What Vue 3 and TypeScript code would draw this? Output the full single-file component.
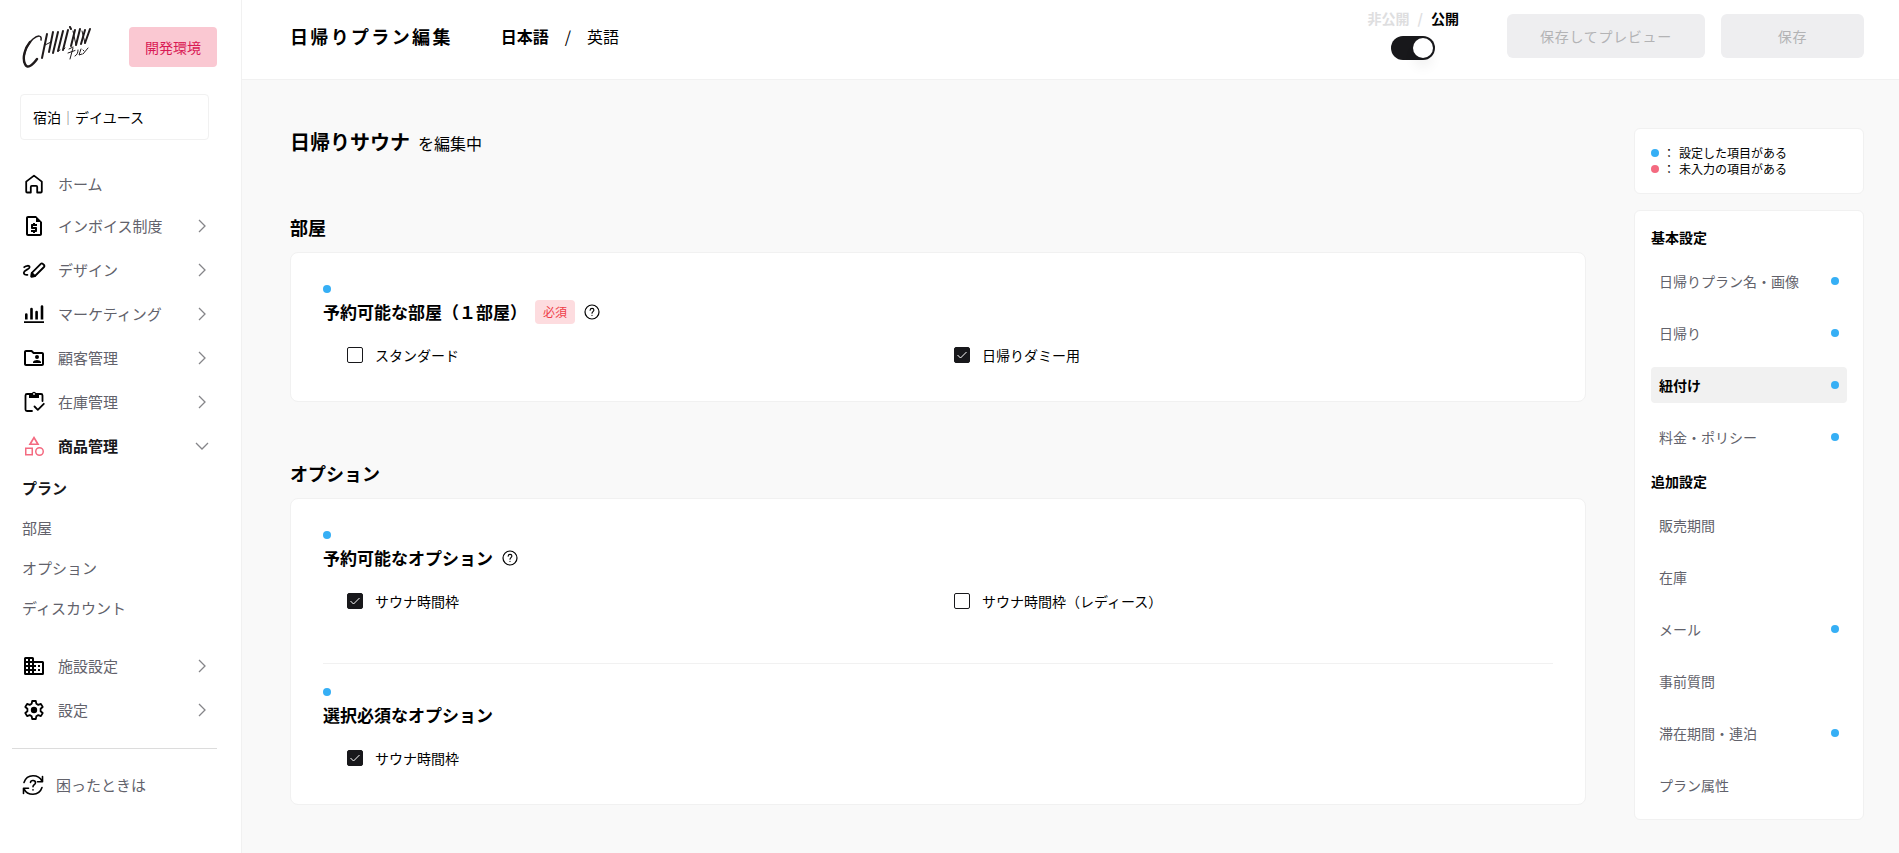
<script setup lang="ts">
import { ref } from 'vue'

type IconName = 'home' | 'invoice' | 'design' | 'chart' | 'customers' | 'stock' | 'products' | 'building' | 'gear'

interface NavItem {
  label: string
  icon: IconName
  open?: boolean
  leaf?: boolean
}

interface Choice {
  id: string
  label: string
  checked: boolean
}

interface Step {
  label: string
  filled: boolean
  current?: boolean
}

const upperNav: NavItem[] = [
  { label: 'ホーム', icon: 'home', leaf: true },
  { label: 'インボイス制度', icon: 'invoice' },
  { label: 'デザイン', icon: 'design' },
  { label: 'マーケティング', icon: 'chart' },
  { label: '顧客管理', icon: 'customers' },
  { label: '在庫管理', icon: 'stock' },
  { label: '商品管理', icon: 'products', open: true },
]

const productNav = ['プラン', '部屋', 'オプション', 'ディスカウント']

const lowerNav: NavItem[] = [
  { label: '施設設定', icon: 'building' },
  { label: '設定', icon: 'gear' },
]

const navGroups = [
  { id: 'upper', items: upperNav, children: productNav },
  { id: 'lower', items: lowerNav, children: [] as string[] },
]

const published = ref(true)

const sections = ref([
  {
    title: '部屋',
    fields: [
      {
        label: '予約可能な部屋（１部屋）',
        required: true,
        help: true,
        choices: [
          { id: 'room-standard', label: 'スタンダード', checked: false },
          { id: 'room-daytrip', label: '日帰りダミー用', checked: true },
        ] as Choice[],
      },
    ],
  },
  {
    title: 'オプション',
    fields: [
      {
        label: '予約可能なオプション',
        required: false,
        help: true,
        choices: [
          { id: 'option-sauna', label: 'サウナ時間枠', checked: true },
          { id: 'option-sauna-ladies', label: 'サウナ時間枠（レディース）', checked: false },
        ] as Choice[],
      },
      {
        label: '選択必須なオプション',
        required: false,
        help: false,
        choices: [{ id: 'must-sauna', label: 'サウナ時間枠', checked: true }] as Choice[],
      },
    ],
  },
])

const stepGroups: { title: string; steps: Step[] }[] = [
  {
    title: '基本設定',
    steps: [
      { label: '日帰りプラン名・画像', filled: true },
      { label: '日帰り', filled: true },
      { label: '紐付け', filled: true, current: true },
      { label: '料金・ポリシー', filled: true },
    ],
  },
  {
    title: '追加設定',
    steps: [
      { label: '販売期間', filled: false },
      { label: '在庫', filled: false },
      { label: 'メール', filled: true },
      { label: '事前質問', filled: false },
      { label: '滞在期間・連泊', filled: true },
      { label: 'プラン属性', filled: false },
    ],
  },
]
</script>

<template>
  <div class="layout">
    <aside class="sidebar">
      <div class="brand">
        <svg class="logo" viewBox="0 0 70 44" role="img" aria-label="CHILLNN" fill="none" stroke="#1f1a1b" stroke-linecap="round">
          <path d="M19 14C20 9 16 9 11 13C4 19 1 29 2 36" stroke-width="1.5" />
          <path d="M8 16C3 22 0 32 3 38C5 43 10 40 15 33" stroke-width="2.4" />
          <path d="M25 8L20 32M31 6L27 26M36 6L31 27M41 5L36 25M46 4L41 24M53 4L49 20M58 3L54 19M63 4L59 18M68 3L63 17" stroke-width="2" />
          <path d="M23 19L29 16M51 5L54 19M60 5L63 17M36 25L38 24M41 24L43 22" stroke-width="1" />
          <path d="M48 1L49 3" stroke-width="2" />
          <path d="M51 21L47 23M46 27L53 24.5M51 22L48 33M56 24C56 27 55 29 53 30M59 23L57 29L60 28M61 24L62 25M66 22L61 28" stroke-width="1" />
        </svg>
        <span class="env">開発環境</span>
      </div>

      <button class="mode" type="button">宿泊<span class="mode-bar">｜</span>デイユース</button>

      <nav class="nav" aria-label="メインメニュー">
        <ul v-for="group in navGroups" :key="group.id" class="nav-group">
          <li v-for="item in group.items" :key="item.label">
            <a href="#" class="nav-link" :class="{ 'is-leaf': item.leaf, 'is-open': item.open }">
              <svg class="nav-icon" viewBox="0 0 24 24" aria-hidden="true" fill="currentColor">
                <path
                  v-if="item.icon === 'home'"
                  d="M5.2 20.5a1 1 0 0 1-1-1V9.6L12 3.6l7.8 6v9.9a1 1 0 0 1-1 1h-3.6v-5.6a1 1 0 0 0-1-1H9.8a1 1 0 0 0-1 1v5.6z"
                  fill="none" stroke="currentColor" stroke-width="1.8" stroke-linejoin="round"
                />
                <path
                  v-else-if="item.icon === 'invoice'"
                  d="M14 2H6c-1.1 0-2 .9-2 2v16c0 1.1.9 2 2 2h12c1.1 0 2-.9 2-2V8l-6-6zM6 20V4h8v4h4v12H6zm5-1h2v-1h1c.55 0 1-.45 1-1v-3c0-.55-.45-1-1-1h-3v-1h4v-2h-2V9h-2v1h-1c-.55 0-1 .45-1 1v3c0 .55.45 1 1 1h3v1H9v2h2v1z"
                />
                <g v-else-if="item.icon === 'design'" fill="none" stroke="currentColor" stroke-width="1.8" stroke-linejoin="round" stroke-linecap="round">
                  <path d="M2.2 9.2C4 7.6 7.6 7 7.6 9.2C7.6 11.4 1.8 12 1.8 14.8C1.8 16.4 3.4 17 5.4 16.8" />
                  <path d="M9.4 18.6L9.8 14.8L18.8 5.8A1.4 1.4 0 0 1 20.8 5.8L22 7A1.4 1.4 0 0 1 22 9L13 18z" />
                  <path d="M9.4 18.6L9.8 15L12.8 18z" fill="currentColor" />
                </g>
                <path
                  v-else-if="item.icon === 'chart'"
                  d="M2 19.3h20v1.8H2zM3 12.5a1.3 1.3 0 0 1 2.6 0v5H3zM8.2 7a1.3 1.3 0 0 1 2.6 0v10.5H8.2zM13.3 10a1.3 1.3 0 0 1 2.6 0v7.5h-2.6zM18.7 4.5a1.3 1.3 0 0 1 2.6 0v13h-2.6z"
                />
                <path
                  v-else-if="item.icon === 'customers'"
                  d="M20 6h-8l-2-2H4c-1.1 0-2 .9-2 2v12c0 1.1.9 2 2 2h16c1.1 0 2-.9 2-2V8c0-1.1-.9-2-2-2zm0 12H4V6h5.17l2 2H20v10zM15 13a2 2 0 1 0 0-4 2 2 0 0 0 0 4zm-4 4h8v-1c0-1.33-2.67-2-4-2s-4 .67-4 2v1z"
                />
                <g v-else-if="item.icon === 'stock'">
                  <path d="M10 21H5a1.5 1.5 0 0 1-1.5-1.5V5.5A1.5 1.5 0 0 1 5 4h14a1.5 1.5 0 0 1 1.5 1.5V11" fill="none" stroke="currentColor" stroke-width="1.8" stroke-linecap="round" />
                  <path d="M7 3.5h2.8a2.3 2.3 0 0 1 4.4 0H17V8H7z" />
                  <circle cx="12" cy="4" r=".9" fill="#fff" />
                  <path d="M12.5 16.5L15.8 19.8L21.8 13.8" fill="none" stroke="currentColor" stroke-width="1.8" stroke-linecap="round" stroke-linejoin="round" />
                </g>
                <path
                  v-else-if="item.icon === 'products'"
                  d="M12 2l-5.5 9h11L12 2zm0 3.2L14.5 9.5h-5L12 5.2zM17.500 13a4.500 4.500 0 1 0 0 9 4.500 4.500 0 0 0 0-9zm0 7.500a3 3 0 1 1 0-6 3 3 0 0 1 0 6zM3 21.500h8v-8H3v8zm1.500-6.500h5v5h-5v-5z"
                />
                <path
                  v-else-if="item.icon === 'building'"
                  d="M12 7V4.500a1.500 1.500 0 0 0-1.500-1.500h-7A1.500 1.500 0 0 0 2 4.500v15A1.500 1.500 0 0 0 3.500 21h17a1.500 1.500 0 0 0 1.500-1.500v-11A1.500 1.500 0 0 0 20.500 7H12zM6 19H4v-2h2v2zm0-4H4v-2h2v2zm0-4H4V9h2v2zm0-4H4V5h2v2zm4 12H8v-2h2v2zm0-4H8v-2h2v2zm0-4H8V9h2v2zm0-4H8V5h2v2zm10 12h-8v-2h2v-2h-2v-2h2v-2h-2V9h8v10zm-2-8h-2v2h2v-2zm0 4h-2v2h2v-2z"
                />
                <g v-else>
                  <path
                    d="M10.2 3h3.6l.5 2.7 2 1.15 2.6-.95 1.8 3.1-2.1 1.8v2.4l2.1 1.8-1.8 3.1-2.6-.95-2 1.15-.5 2.7h-3.6l-.5-2.7-2-1.15-2.6.95L3.300 15l2.100-1.800v-2.400L3.300 9l1.800-3.100 2.600.95 2-1.150z"
                    fill="none" stroke="currentColor" stroke-width="1.8" stroke-linejoin="round"
                  />
                  <circle cx="12" cy="12" r="3.2" />
                </g>
              </svg>
              <span class="nav-text">{{ item.label }}</span>
              <svg v-if="!item.leaf" class="chevron" viewBox="0 0 14 14" aria-hidden="true">
                <path :d="item.open ? 'M1 4L7 10L13 4' : 'M4 1L10 7L4 13'" />
              </svg>
            </a>
            <ul v-if="item.open" class="sub-nav">
              <li v-for="(child, index) in group.children" :key="child">
                <a href="#" class="sub-link" :class="{ 'is-current': index === 0 }">{{ child }}</a>
              </li>
            </ul>
          </li>
        </ul>
      </nav>

      <a href="#" class="support">
        <svg class="support-icon" viewBox="0 0 24 24" fill="none" stroke="currentColor" stroke-width="1.6" stroke-linecap="round" stroke-linejoin="round" aria-hidden="true">
          <path d="M3 9.5C4.5 5 8 2.8 12 2.8C16 2.8 19.5 5 21 8.2M21.5 3.5V8.7H16.5" />
          <path d="M21 14.5C19.5 19 16 21.2 12 21.2C8 21.2 4.5 19 3 15.8M2.5 20.5V15.3H7.5" />
          <path d="M9.5 9.5C9.7 6.7 14.5 6.8 14.5 9.7C14.5 11.7 12 11.7 12 13.8M12 16.7V16.9" />
        </svg>
        困ったときは
      </a>
    </aside>

    <div class="page">
      <header class="header">
        <h1 class="header-title">日帰りプラン編集</h1>
        <div class="languages">
          <a href="#" class="language is-current">日本語</a>
          <span>/</span>
          <a href="#" class="language">英語</a>
        </div>
        <div class="publish">
          <label class="publish-label" for="publish">
            <span>非公開</span><span>/</span><span class="publish-on">公開</span>
          </label>
          <input id="publish" v-model="published" class="switch" type="checkbox" role="switch" />
        </div>
        <div class="actions">
          <button class="action is-wide" type="button" disabled>保存してプレビュー</button>
          <button class="action" type="button" disabled>保存</button>
        </div>
      </header>

      <div class="body">
        <main class="main">
          <p class="editing"><strong>日帰りサウナ</strong><span>を編集中</span></p>

          <section v-for="section in sections" :key="section.title" class="section">
            <h2 class="section-title">{{ section.title }}</h2>
            <div class="card">
              <fieldset v-for="field in section.fields" :key="field.label" class="field">
                <legend class="field-legend">
                  <i class="dot"></i>
                  <span class="field-head">
                    <span class="field-label">{{ field.label }}</span>
                    <span v-if="field.required" class="required">必須</span>
                    <button v-if="field.help" class="help" type="button" aria-label="ヘルプ">
                      <svg viewBox="0 0 18 18" fill="none" stroke="currentColor" stroke-linecap="round" aria-hidden="true">
                        <circle cx="9" cy="9" r="7" stroke-width="1.2" />
                        <path d="M7.1 7.2C7.3 4.7 10.9 4.8 10.9 7.1C10.9 8.6 9 8.7 9 10.3M9 12.4V12.5" stroke-width="1.1" />
                      </svg>
                    </button>
                  </span>
                </legend>
                <div class="choices">
                  <div v-for="choice in field.choices" :key="choice.id" class="choice">
                    <span class="box">
                      <input :id="choice.id" v-model="choice.checked" type="checkbox" />
                      <svg v-if="choice.checked" viewBox="0 0 16 16" aria-hidden="true"><path d="M3.500 8L6.500 11L12.500 5" /></svg>
                    </span>
                    <label :for="choice.id">{{ choice.label }}</label>
                  </div>
                </div>
              </fieldset>
            </div>
          </section>
        </main>

        <aside class="panel">
          <ul class="legend">
            <li><i class="dot"></i><span>：</span>設定した項目がある</li>
            <li><i class="dot is-missing"></i><span>：</span>未入力の項目がある</li>
          </ul>
          <nav class="steps" aria-label="設定項目">
            <template v-for="group in stepGroups" :key="group.title">
              <h3 class="steps-title">{{ group.title }}</h3>
              <a v-for="step in group.steps" :key="step.label" href="#" class="step" :class="{ 'is-current': step.current }">
                {{ step.label }}<i v-if="step.filled" class="dot"></i>
              </a>
            </template>
          </nav>
        </aside>
      </div>
    </div>
  </div>
</template>

<style>
body {
  background: #f9f9f9;
}
</style>

<style scoped>
.layout,
.layout * {
  box-sizing: border-box;
}

.layout {
  display: flex;
  min-height: 100vh;
  color: #000;
  font-family: "Noto Sans CJK JP", sans-serif;
  font-size: 14px;
  line-height: 20px;
}

.layout ul {
  margin: 0;
  padding: 0;
  list-style: none;
}

.layout a {
  color: inherit;
  text-decoration: none;
}

.layout button,
.layout input {
  margin: 0;
  font-family: inherit;
}

.dot {
  flex: none;
  display: block;
  width: 8px;
  height: 8px;
  border-radius: 50%;
  background: #36aff5;
}

.dot.is-missing {
  background: #f46a80;
}

/* Sidebar */
.sidebar {
  flex: none;
  width: 242px;
  border-right: 1px solid #f1f1f1;
  background: #fff;
}

.brand {
  display: flex;
  justify-content: space-between;
  padding: 26px 24px 0 22px;
}

.logo {
  width: 70px;
  height: 44px;
}

.env {
  height: 40px;
  margin-top: 1px;
  padding: 10px 16px;
  border-radius: 4px;
  background: #fac8d2;
  color: #d91a55;
}

.layout .mode {
  display: block;
  width: 189px;
  height: 46px;
  margin: 24px 0 0 20px;
  padding: 0 12px;
  border: 1px solid #f1f1f1;
  border-radius: 4px;
  background: #fff;
  color: #000;
  font-size: 14px;
  text-align: left;
}

.mode-bar {
  color: #777;
}

.nav {
  margin: 24px 24px 0 12px;
  padding-bottom: 16px;
  border-bottom: 1px solid #dcdcdc;
  font-size: 15px;
}

.nav-group + .nav-group {
  margin-top: 16px;
}

.layout .nav-group + .nav-group {
  margin-top: 16px;
}

.nav-link {
  display: flex;
  align-items: center;
  height: 44px;
  padding: 0 8px 0 10px;
}

.nav-link.is-leaf {
  height: 40px;
}

.nav-icon {
  width: 24px;
  height: 24px;
  margin-right: 12px;
}

.nav-text {
  flex: 1;
  color: #62626b;
}

.is-open .nav-icon {
  color: #f46a80;
}

.is-open .nav-text {
  color: #18181b;
  font-weight: 700;
}

.chevron {
  width: 14px;
  height: 14px;
  fill: none;
  stroke: #858589;
  stroke-width: 1.3;
}

.sub-link {
  display: flex;
  align-items: center;
  height: 40px;
  padding-left: 10px;
}

.layout .sub-link {
  color: #62626b;
}

.layout .sub-link.is-current {
  color: #18181b;
  font-weight: 700;
}

.support {
  display: flex;
  align-items: center;
  gap: 11px;
  height: 40px;
  margin: 16px 24px 0 21px;
  font-size: 15px;
}

.layout .support {
  color: #62626b;
}

.support-icon {
  width: 24px;
  height: 24px;
  color: #000;
}

/* Header */
.page {
  flex: 1;
  min-width: 0;
}

.header {
  display: flex;
  align-items: center;
  height: 80px;
  padding: 0 35px 7px 48px;
  border-bottom: 1px solid #f1f1f1;
  background: #fff;
}

.header-title {
  margin: 0;
  font-size: 18px;
  line-height: 28px;
  letter-spacing: 0.13em;
}

.languages {
  display: flex;
  gap: 16px;
  margin-left: 48px;
  font-size: 16px;
  line-height: 24px;
}

.language.is-current {
  font-weight: 700;
}

.publish {
  display: flex;
  flex-direction: column;
  align-items: center;
  gap: 8px;
  margin: 0 48px 4px auto;
}

.publish-label {
  display: flex;
  gap: 8px;
  color: #dededf;
  font-weight: 700;
}

.publish-on {
  color: #000;
}

.switch {
  appearance: none;
  display: flex;
  align-items: center;
  width: 44px;
  height: 24px;
  padding: 2px;
  border-radius: 12px;
  background: #c8c8cc;
}

.switch::before {
  content: "";
  width: 20px;
  height: 20px;
  border-radius: 50%;
  background: #fff;
  box-shadow: 0 10px 12px rgba(0, 0, 0, 0.05);
}

.switch:checked {
  justify-content: flex-end;
  background: #18181b;
}

.actions {
  display: flex;
  gap: 16px;
}

.action {
  min-width: 143px;
  height: 44px;
  padding: 0 24px;
  border: 0;
  border-radius: 6px;
  background: #eeeef0;
  color: #b3b3b5;
  font-size: 14px;
  letter-spacing: 0.05em;
}

.action.is-wide {
  min-width: 198px;
}

/* Form */
.body {
  display: flex;
  align-items: flex-start;
  gap: 48px;
  padding: 48px 35px 32px 48px;
}

.main {
  flex: 1;
  min-width: 0;
}

.editing {
  display: flex;
  align-items: baseline;
  gap: 8px;
  height: 28px;
  margin: 0;
  font-size: 16px;
  line-height: 24px;
}

.editing strong {
  font-size: 20px;
  line-height: 28px;
}

.section {
  margin-top: 58px;
}

.section-title {
  margin: 0 0 12px;
  font-size: 18px;
  line-height: 26px;
}

.card {
  padding: 32px;
  border: 1px solid #f1f1f1;
  border-radius: 8px;
  background: #fff;
}

.field {
  min-width: 0;
  margin: 0;
  padding: 0;
  border: 0;
}

.field + .field {
  margin-top: 48px;
  padding-top: 24px;
  border-top: 1px solid #f1f1f1;
}

.field-legend {
  float: left;
  width: 100%;
  padding: 0;
}

.field-head {
  display: flex;
  align-items: center;
  gap: 8px;
  height: 24px;
  margin-top: 7px;
}

.field-label {
  font-size: 17px;
  line-height: 24px;
  font-weight: 700;
}

.required {
  padding: 2px 8px;
  border-radius: 4px;
  background: #fddcdf;
  color: #ef3c48;
  font-size: 12px;
}

.help {
  display: flex;
  width: 18px;
  height: 18px;
  padding: 0;
  border: 0;
  background: none;
  color: #000;
}

.help svg {
  width: 18px;
  height: 18px;
}

.choices {
  clear: both;
  display: grid;
  grid-template-columns: 1fr 1fr;
  gap: 8px;
  padding: 21px 0 4px 24px;
}

.choice {
  display: flex;
  align-items: center;
  gap: 12px;
  height: 20px;
}

.box {
  display: grid;
}

.box input,
.box svg {
  grid-area: 1 / 1;
  width: 16px;
  height: 16px;
}

.box input {
  appearance: none;
  border: 1px solid #18181b;
  border-radius: 2px;
  background: #fff;
}

.box input:checked {
  background: #18181b;
}

.box svg {
  fill: none;
  stroke: #fff;
  stroke-width: 1;
  pointer-events: none;
}

/* Progress panel */
.panel {
  flex: none;
  width: 230px;
}

.legend,
.steps {
  border: 1px solid #f1f1f1;
  border-radius: 6px;
  background: #fff;
}

.layout .legend {
  margin-bottom: 16px;
  padding: 16px;
  font-size: 12px;
  line-height: 16px;
}

.legend li {
  display: flex;
  align-items: center;
  gap: 4px;
}

.steps {
  display: flex;
  flex-direction: column;
  gap: 16px;
  padding: 16px;
}

.steps-title {
  margin: 0;
  font-size: 14px;
  line-height: 20px;
}

.step {
  display: flex;
  align-items: center;
  justify-content: space-between;
  height: 36px;
  padding: 0 8px;
  border-radius: 4px;
}

.layout .step {
  color: #62626b;
}

.layout .step.is-current {
  background: #f1f1f1;
  color: #000;
  font-weight: 700;
}
</style>
